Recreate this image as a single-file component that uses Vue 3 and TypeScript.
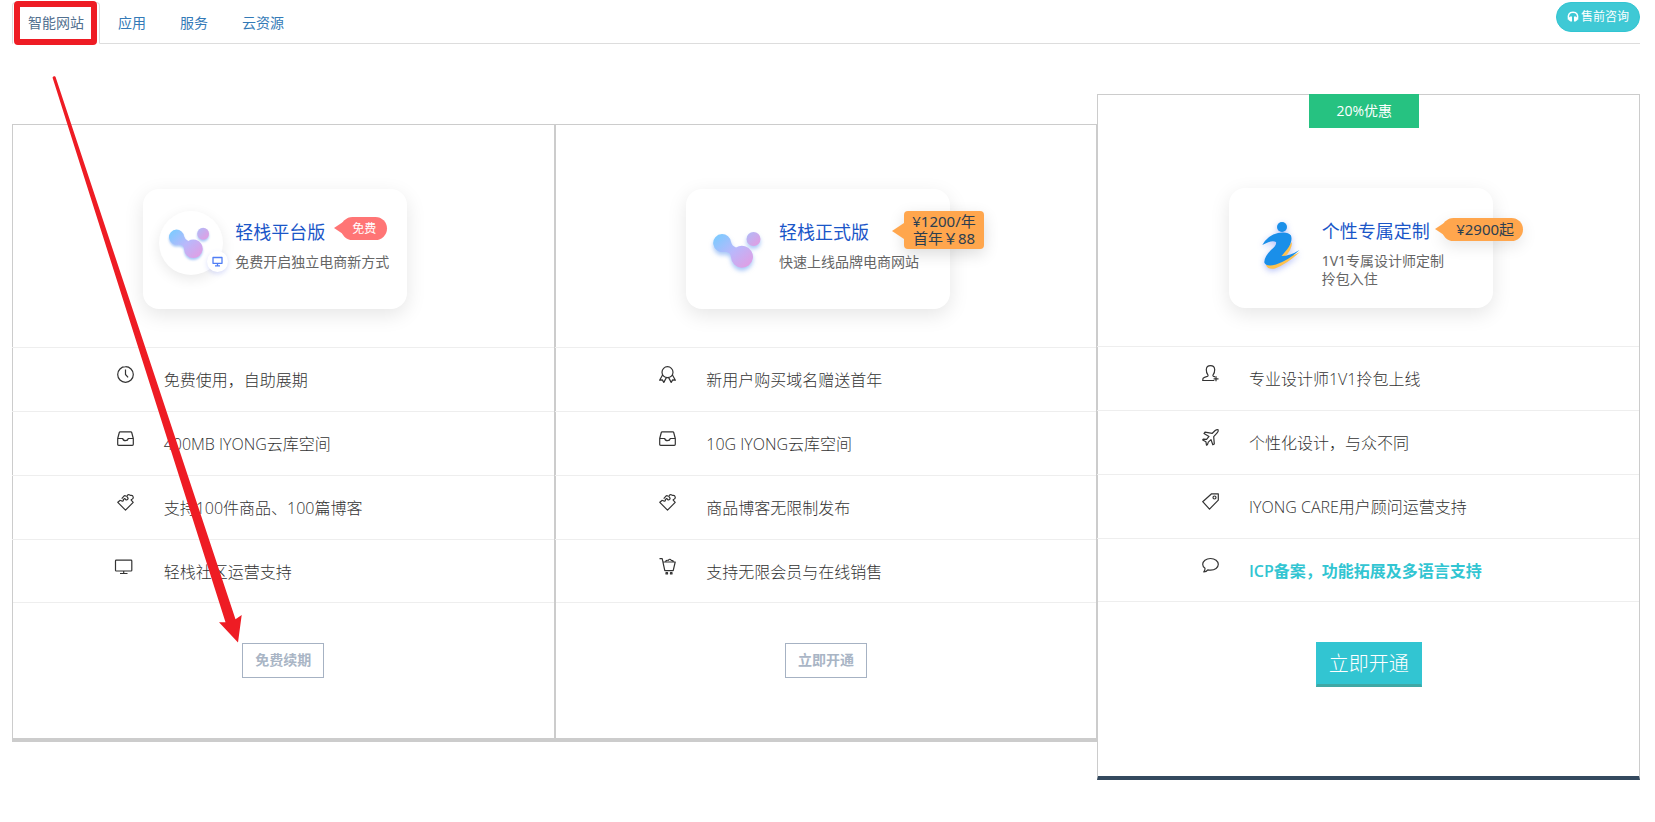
<script setup lang="ts">
type IconName = 'clock' | 'inbox' | 'puzzle' | 'screen' | 'ribbon' | 'cart' | 'user' | 'plane' | 'tag' | 'chat'

interface Feature {
  icon: IconName
  text: string
  strong?: boolean
}

interface Plan {
  id: string
  title: string
  summary: string[]
  logo: 'platform' | 'molecule' | 'person'
  tag: string[]
  tagStyle: 'free' | 'box' | 'price'
  discount?: string
  features: Feature[]
  action: string
  featured?: boolean
}

const tabs: string[] = ['智能网站', '应用', '服务', '云资源']

const icons: Record<IconName, string> = {
  clock: 'M8.5 .7a7.8 7.8 0 1 0 0 15.6a7.8 7.8 0 1 0 0-15.6M8.5 3.5v5l2.6 2.8',
  inbox: 'M3.2 1.8h10.6q.7 0 .9.7l1.6 6v5.800q0 1-1 1H1.700q-1 0-1-1V8.500l1.600-6q.2-.7.9-.7M.7 8.500h5q.5 2.200 2.800 2.200t2.800-2.200h5',
  puzzle: 'M3.300 6.200L.8 8.300l7.700 7.800 7.700-7.800-2-2.200q-.2-.7.700-.8 1.600-.5 1.300-2.300-.4-1.900-2.100-1.700-.9.300-1.300-.3-1.300-.8-2.300.2-.8 1-.2 1.900 1.200 1 .5 2.100-1 1.300-2.300.4-.3-1.100-1.200-.9-1.300.5-.9 1.700-.2.900-1.200.8-1-.1-1.900-1M4.700 4.600l2.500-2.700q1.300-.7 2 .6',
  screen: 'M-.7 2.200h14.700q.8 0 .8.800v9.200q0 .8-.8.800H-.7q-.8 0-.8-.8V3q0-.8.8-.8M6.700 13v2.300M3 15.500h7.500',
  ribbon: 'M8.500 .7a5.500 5.500 0 1 0 0 11a5.500 5.500 0 1 0 0-11M3.700 8.800L.6 14.200l2.700-.3 1.500 2.500 2.700-5M13.300 8.800l3.100 5.400-2.700-.3-1.500 2.500-2.700-5',
  cart: 'M.5.700h2.700l2.600 12h8.400l2-8.700H4M6.700 4q0-2 2.500-1.700Q11 .2 12.200 2.300q2.200-.1 2.300 1.700M7 14.700h1.500v1.300H7zM11.500 14.700H13v1.300h-1.500z',
  user: 'M12.300 15.500H.7q-.2-2.500 1.700-3.100l3.300-1.200q.6-.5.2-1.300Q4.200 7.700 4.300 4.500 4.600.7 8.500.7t4.200 3.800q.1 3.200-1.600 5.400-.5.900.2 1.300l1.700.7M14 11.300v4.900M11.600 13.800h4.900',
  plane: 'M16.200.8q-1.500-.4-3 .7L10.300 4.300 3 3.200 2 4.600l5 2.800-2.400 3-3.300-.3-.6.8 3.200 1.800.6 3.400.9-.3.900-2.700 2.700-2.500 1.800 5.200 1.500-.9-.6-7.200 3.200-3.500q1.600-1.700 1.300-3.400z',
  tag: 'M9.600.8h6.700v6.300l-8.800 9.100L.7 8.700zM12.500 3a1.500 1.500 0 1 0 0 3a1.500 1.500 0 1 0 0-3',
  chat: 'M8.500 1.500C4 1.500.7 4 .7 7.300q0 2.300 2.300 4 .2 1.500-1.200 3.600 2.600-.2 4-2.100 1.300.3 2.700.3c4.500 0 7.800-2.500 7.800-5.800S13 1.500 8.500 1.500z',
}

const plans: Plan[] = [
  {
    id: 'free',
    title: '轻栈平台版',
    summary: ['免费开启独立电商新方式'],
    logo: 'platform',
    tag: ['免费'],
    tagStyle: 'free',
    features: [
      { icon: 'clock', text: '免费使用，自助展期' },
      { icon: 'inbox', text: '400MB IYONG云库空间' },
      { icon: 'puzzle', text: '支持100件商品、100篇博客' },
      { icon: 'screen', text: '轻栈社区运营支持' },
    ],
    action: '免费续期',
  },
  {
    id: 'standard',
    title: '轻栈正式版',
    summary: ['快速上线品牌电商网站'],
    logo: 'molecule',
    tag: ['¥1200/年', '首年￥88'],
    tagStyle: 'box',
    features: [
      { icon: 'ribbon', text: '新用户购买域名赠送首年' },
      { icon: 'inbox', text: '10G IYONG云库空间' },
      { icon: 'puzzle', text: '商品博客无限制发布' },
      { icon: 'cart', text: '支持无限会员与在线销售' },
    ],
    action: '立即开通',
  },
  {
    id: 'custom',
    title: '个性专属定制',
    summary: ['1V1专属设计师定制', '拎包入住'],
    logo: 'person',
    tag: ['¥2900起'],
    tagStyle: 'price',
    discount: '20%优惠',
    features: [
      { icon: 'user', text: '专业设计师1V1拎包上线' },
      { icon: 'plane', text: '个性化设计，与众不同' },
      { icon: 'tag', text: 'IYONG CARE用户顾问运营支持' },
      { icon: 'chat', text: 'ICP备案，功能拓展及多语言支持', strong: true },
    ],
    action: '立即开通',
    featured: true,
  },
]
</script>

<template>
  <div class="page">
    <header class="topbar">
      <nav class="tabs">
        <a v-for="(tab, i) in tabs" :key="tab" href="#" class="tab" :class="{ active: i === 0 }">{{ tab }}</a>
      </nav>
      <button type="button" class="consult">
        <svg class="headset" viewBox="0 0 12 12" aria-hidden="true">
          <path d="M1.500 8.500Q.2 1.300 6 1.300t4.500 7.200" fill="none" stroke="currentColor" stroke-width="1.500" />
          <path d="M3 5.500h2v5H3.500L1.500 9V7zM9 5.500H7v5h1.500l2-1.500V7z" fill="currentColor" />
        </svg>
        <span>售前咨询</span>
      </button>
    </header>

    <main class="plans">
      <section v-for="plan in plans" :key="plan.id" class="plan" :class="{ featured: plan.featured }">
        <span v-if="plan.discount" class="discount">{{ plan.discount }}</span>
        <div class="hero">
          <div class="promo">
            <div class="card">
              <div class="logo" :class="plan.logo">
                <div v-if="plan.logo === 'platform'" class="disc">
                  <svg class="molecule-small" viewBox="0 0 52 42" aria-hidden="true">
                    <path fill="url(#blob-free)" d="M10 3a9 9 0 0 1 9 8q1 4 5 5.500 4-2.500 9-1.300A11 11 0 1 1 19 26.500Q19 21 12.500 20.700A9 9 0 1 1 10 3z" />
                    <circle cx="41.500" cy="8" r="7" fill="url(#dot-free)" />
                    <defs>
                      <linearGradient id="blob-free" x1="0" y1="0" x2="1" y2="1">
                        <stop offset="0" stop-color="#74cdff" /><stop offset=".5" stop-color="#b9b8fb" /><stop offset="1" stop-color="#e79ae0" />
                      </linearGradient>
                      <linearGradient id="dot-free" x1="0" y1="0" x2="1" y2="1">
                        <stop offset="0" stop-color="#aebcf8" /><stop offset="1" stop-color="#e79ae0" />
                      </linearGradient>
                    </defs>
                  </svg>
                  <span class="mini">
                    <svg viewBox="0 0 11 11" aria-hidden="true">
                      <path d="M1 1.500h9v5.800H1zM3 9.800h5M5.500 7.300v2" fill="none" stroke="#4f7df5" stroke-width="1.300" stroke-linejoin="round" />
                    </svg>
                  </span>
                </div>
                <svg v-else-if="plan.logo === 'molecule'" class="molecule-large" viewBox="0 0 52 42" aria-hidden="true">
                  <path fill="url(#blob-std)" d="M10 3a9 9 0 0 1 9 8q1 4 5 5.500 4-2.500 9-1.300A11 11 0 1 1 19 26.500Q19 21 12.500 20.700A9 9 0 1 1 10 3z" />
                  <circle cx="41.500" cy="8" r="7" fill="url(#dot-std)" />
                  <defs>
                    <linearGradient id="blob-std" x1="0" y1="0" x2="1" y2="1">
                      <stop offset="0" stop-color="#74cdff" /><stop offset=".5" stop-color="#b9b8fb" /><stop offset="1" stop-color="#e79ae0" />
                    </linearGradient>
                    <linearGradient id="dot-std" x1="0" y1="0" x2="1" y2="1">
                      <stop offset="0" stop-color="#aebcf8" /><stop offset="1" stop-color="#e79ae0" />
                    </linearGradient>
                  </defs>
                </svg>
                <svg v-else class="figure" viewBox="0 0 38 48" aria-hidden="true">
                  <path fill="#ffc24d" d="M4 43Q6 48 13 46.500 24 42.500 38 30 29 35 22 35 30 29 30 20L18 35 5 42z" />
                  <circle cx="20" cy="5" r="5" fill="#1a8fe9" />
                  <path fill="#1a8fe9" d="M.3 23Q6 13 16 11 26 9.500 29 13.500 31 20 25 27.500 22 31 19.500 34 28 34 37.500 28 27 38 14 42.500 4 45 2.300 40.500 2 35 9 28 15 23 14 20 10 17.500.3 23z" />
                </svg>
              </div>
              <div class="copy">
                <h2>{{ plan.title }}</h2>
                <p><span v-for="line in plan.summary" :key="line">{{ line }}</span></p>
              </div>
              <div class="price-tag" :class="plan.tagStyle">
                <span v-for="line in plan.tag" :key="line">{{ line }}</span>
              </div>
            </div>
          </div>
        </div>

        <ul class="features">
          <li v-for="feature in plan.features" :key="feature.text">
            <span class="icon">
              <svg viewBox="0 0 17 17" aria-hidden="true"><path :d="icons[feature.icon]" /></svg>
            </span>
            <span class="label" :class="{ strong: feature.strong }">{{ feature.text }}</span>
          </li>
        </ul>

        <div class="action">
          <button type="button">{{ plan.action }}</button>
        </div>
      </section>
    </main>

    <svg class="markup" viewBox="0 0 250 650" aria-hidden="true">
      <rect x="17" y="4" width="77" height="38" rx="1" fill="none" stroke="#ee1c24" stroke-width="6" stroke-linejoin="round" />
      <path fill="#ee1c24" d="M52.500 77.500L54 76l1.500.8 180 542.500 6.200-4.300-3.700 27.500-19-20.200h6.500z" />
    </svg>
  </div>
</template>

<style>
body {
  margin: 0;
  background: #fff;
}
</style>

<style scoped>
.page {
  position: relative;
  box-sizing: border-box;
  padding: 2px 15px 42px 12px;
  font-family: "Open Sans", "Noto Sans CJK SC", sans-serif;
  font-size: 14px;
  line-height: 20px;
  color: #333;
}

.topbar {
  display: flex;
  align-items: flex-start;
  justify-content: space-between;
  border-bottom: 1px solid #ddd;
}

.tabs {
  display: flex;
  gap: 2px;
}

.tab {
  margin-bottom: -1px;
  padding: 10px 15px;
  border: 1px solid transparent;
  border-radius: 4px 4px 0 0;
  color: #337ab7;
  text-decoration: none;
}

.tab.active {
  border-color: #ddd #ddd #fff;
  background: #fff;
  color: #52708f;
}

.consult {
  display: flex;
  align-items: center;
  gap: 2px;
  height: 30px;
  padding: 0 10px;
  border: 1px solid #32c5d2;
  border-radius: 15px;
  background: #3fc9d5;
  color: #fff;
  font: inherit;
  font-size: 12px;
  line-height: 18px;
}

.headset {
  width: 12px;
  height: 12px;
}

.plans {
  display: grid;
  grid-template-columns: repeat(3, minmax(0, 1fr));
  align-items: start;
  padding-top: 50px;
}

.plan {
  position: relative;
  margin-top: 30px;
  border: 1px solid #ccc;
  border-bottom: 4px solid #ccc;
}

.plan.featured {
  margin-top: 0;
  border-bottom-color: #34495e;
}

.discount {
  position: absolute;
  top: -1px;
  left: 39%;
  width: 110px;
  background: #26c281;
  color: #fff;
  line-height: 34px;
  text-align: center;
}

.hero {
  display: flex;
  justify-content: center;
  padding: 64px 0 38px;
}

.featured .hero {
  padding-top: 93px;
}

.promo {
  width: 280px;
}

.card {
  position: relative;
  display: flex;
  width: 264px;
  height: 120px;
  border-radius: 16px;
  background: #fff;
  box-shadow: 0 6px 20px rgba(0, 0, 0, 0.1);
}

.logo {
  display: flex;
  flex: none;
  align-items: center;
  justify-content: center;
  box-sizing: border-box;
  width: 93px;
}

.logo.platform {
  width: 92px;
  padding: 0 0 12px 4px;
}

.logo.molecule {
  padding: 6px 0 0 12px;
}

.logo.person {
  padding: 0 0 4px 12px;
}

.disc {
  position: relative;
  display: flex;
  align-items: center;
  justify-content: center;
  width: 64px;
  height: 64px;
  border-radius: 50%;
  background: #fff;
  box-shadow: 0 4px 14px rgba(0, 0, 0, 0.09);
}

.molecule-small {
  width: 44px;
  margin: 4px 2px 0 0;
  filter: drop-shadow(0 2px 1px rgba(85, 145, 240, 0.5));
}

.molecule-large {
  width: 52px;
  filter: drop-shadow(0 3px 2px rgba(85, 145, 240, 0.5));
}

.figure {
  width: 38px;
  height: 48px;
  filter: drop-shadow(0 2px 3px rgba(70, 100, 240, 0.4));
}

.mini {
  position: absolute;
  right: -5px;
  bottom: 3px;
  display: flex;
  align-items: center;
  justify-content: center;
  width: 21px;
  height: 21px;
  border-radius: 50%;
  background: #fff;
  box-shadow: 0 2px 5px rgba(80, 100, 240, 0.2);
}

.mini svg {
  width: 11px;
  height: 11px;
}

.copy {
  padding-top: 31px;
  white-space: nowrap;
}

.copy h2 {
  margin: 0 0 9px;
  color: #1a56c8;
  font-size: 18px;
  font-weight: 400;
  line-height: 24px;
}

.copy p {
  margin: 0;
  color: #666;
  font-family: "Noto Sans", "Noto Sans CJK SC", sans-serif;
  line-height: 18px;
}

.copy p span,
.price-tag span {
  display: block;
}

.price-tag {
  position: absolute;
  box-sizing: border-box;
  background: #ffa64d;
  color: #2c3e50;
  font-family: "Noto Sans", "Noto Sans CJK SC", sans-serif;
  font-size: 15px;
  text-align: center;
  white-space: nowrap;
}

.price-tag::before {
  content: "";
  position: absolute;
  border: 8px solid transparent;
  border-right: 12px solid #ffa64d;
  border-left: 0;
}

.price-tag.free {
  top: 28px;
  left: 198px;
  width: 46px;
  border-radius: 12px;
  background: #ff7575;
  color: #fff;
  font-size: 12px;
  line-height: 23px;
}

.price-tag.free::before {
  top: 3px;
  left: -7px;
  border-right-color: #ff7575;
}

.price-tag.box {
  top: 22px;
  left: 218px;
  width: 80px;
  padding: 2px 0;
  border-radius: 4px;
  line-height: 17px;
  box-shadow: 0 5px 16px rgba(0, 0, 0, 0.14);
}

.price-tag.box::before {
  top: 12px;
  left: -12px;
}

.price-tag.price {
  top: 30px;
  left: 213px;
  width: 81px;
  padding-left: 6px;
  border-radius: 12px;
  line-height: 23px;
  box-shadow: 0 5px 16px rgba(0, 0, 0, 0.1);
}

.price-tag.price::before {
  top: 3px;
  left: -7px;
}

.features {
  margin: 0;
  padding: 0;
  border-bottom: 1px solid #eee;
  list-style: none;
}

.features li {
  display: grid;
  grid-template-columns: 28% 1fr;
  height: 63px;
  margin-left: -1px;
  border-top: 1px solid #eee;
}

.features li:last-child {
  height: 62px;
}

.icon {
  display: flex;
  justify-content: flex-end;
  padding: 18px 30px 0 0;
}

.icon svg {
  width: 17px;
  height: 17px;
  overflow: visible;
  fill: none;
  stroke: #333;
  stroke-width: 1.2;
  stroke-linejoin: round;
}

.label {
  font-size: 16px;
  font-weight: 300;
  line-height: 64px;
  white-space: nowrap;
}

.label.strong {
  color: #32c5d2;
  font-weight: 600;
}

.action {
  display: flex;
  justify-content: center;
  padding: 40px 0 60px;
}

.action button {
  padding: 6px 12px 7px;
  border: 1px solid #a6b2c3;
  background: transparent;
  color: #a9b5c5;
  font: inherit;
  font-weight: 600;
}

.featured .action {
  padding-bottom: 89px;
}

.featured .action button {
  padding: 8px 12px;
  border-color: #32c5d2;
  border-bottom: 3px solid #40a8a5;
  background: #32c5d2;
  color: #fff;
  font-size: 20px;
  font-weight: 300;
  line-height: 25px;
}

.markup {
  position: absolute;
  top: 0;
  left: 0;
  width: 250px;
  height: 650px;
  pointer-events: none;
}
</style>
